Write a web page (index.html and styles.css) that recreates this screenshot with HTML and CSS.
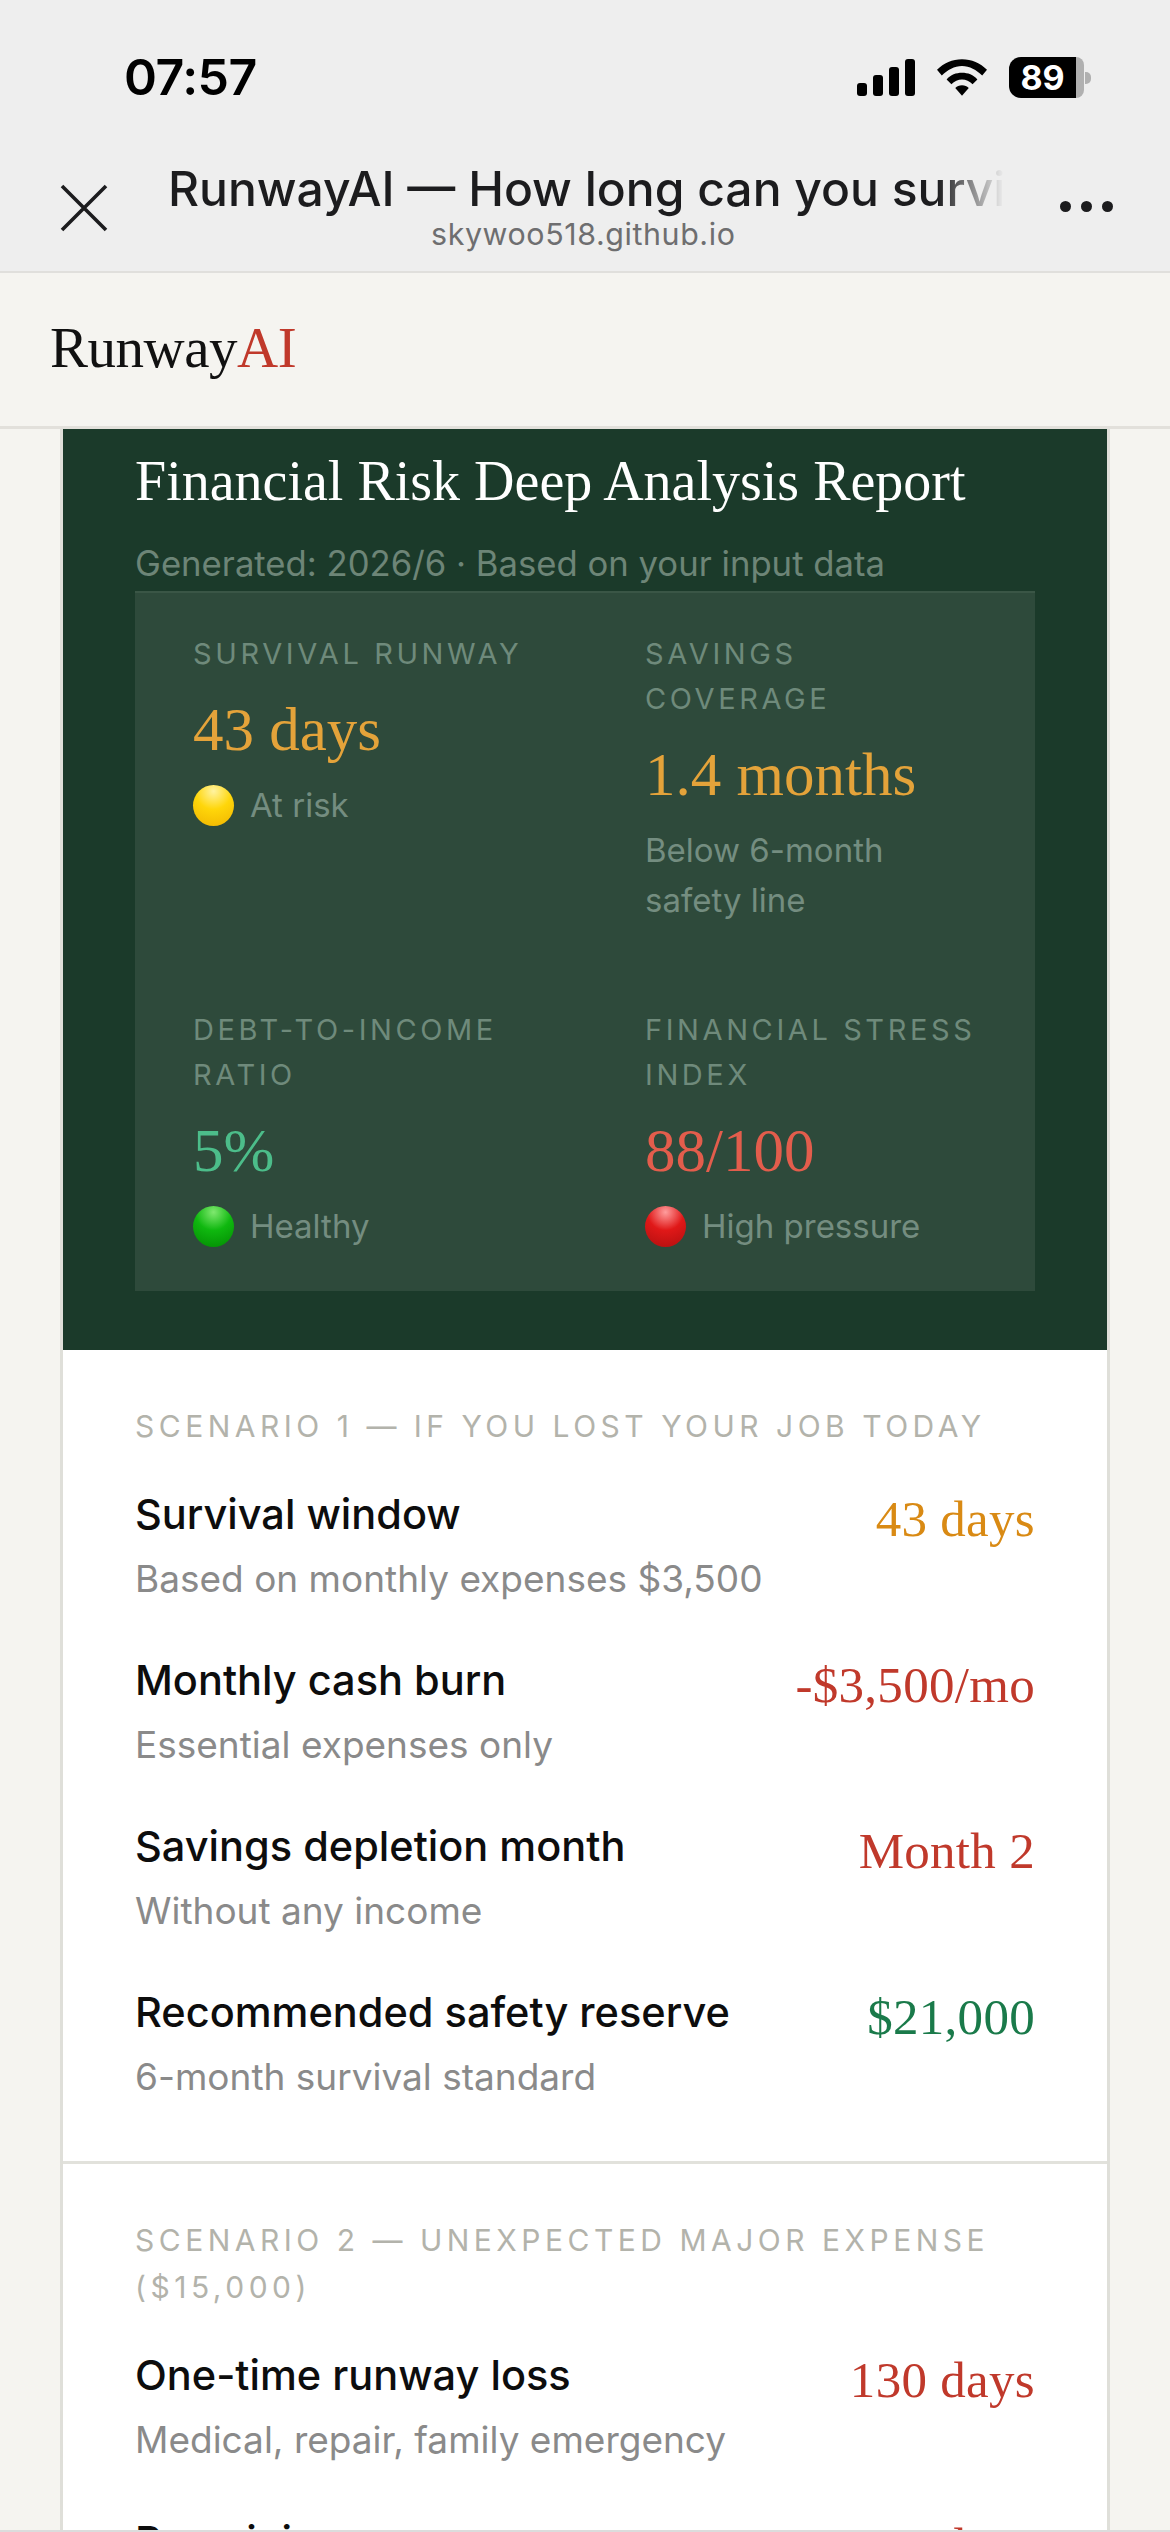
FILE: index.html
```html
<!DOCTYPE html>
<html lang="en">
<head>
  <meta charset="UTF-8" />
  <title>RunwayAI</title>
  <link rel="stylesheet" href="styles.css">
</head>
<body>
  <div class="browser-top">
    <div class="status-bar">
      <span class="clock">07:57</span>
      <div class="status-icons">
        <svg class="signal" width="58" height="37" viewBox="0 0 58 37"><rect x="0" y="24" width="10" height="13" rx="3"/><rect x="16" y="16" width="10" height="21" rx="3"/><rect x="32" y="8" width="10" height="29" rx="3"/><rect x="48" y="0" width="10" height="37" rx="3"/></svg>
        <svg class="wifi" width="50" height="37" viewBox="0 0 52 38"><path d="M26 0C16 0 7 4 0 11l5 6C11 11 18 7 26 7s15 4 21 10l5-6C45 4 36 0 26 0z"/><path d="M26 14c-6 0-12 2-16 7l5 5c3-3 7-5 11-5s8 2 11 5l5-5c-4-5-10-7-16-7z"/><path d="M26 27c-3 0-5 1-7 3l7 8 7-8c-2-2-4-3-7-3z"/></svg>
        <div class="battery"><span class="battery-fill">89</span><span class="battery-rest"></span><span class="battery-cap"></span></div>
      </div>
    </div>
    <div class="title-bar">
      <svg class="close-icon" width="48" height="48" viewBox="0 0 48 48"><path d="M2 2l44 44M46 2L2 46" stroke="#1c1c1e" stroke-width="3.6" fill="none"/></svg>
      <div class="title-text">
        <div class="page-title">RunwayAI — How long can you survive</div>
        <div class="page-url">skywoo518.github.io</div>
      </div>
      <div class="more-dots"><i></i><i></i><i></i></div>
    </div>
  </div>

  <header class="site-header">
    <div class="logo">Runway<span>AI</span></div>
  </header>

  <main class="report">
    <section class="hero">
      <h1>Financial Risk Deep Analysis Report</h1>
      <p class="generated">Generated: 2026/6 · Based on your input data</p>
      <div class="metrics">
        <div class="metric">
          <div class="metric-label">SURVIVAL RUNWAY</div>
          <div class="metric-value amber">43 days</div>
          <div class="metric-note"><b class="dot dot-yellow"></b>At risk</div>
        </div>
        <div class="metric">
          <div class="metric-label">SAVINGS COVERAGE</div>
          <div class="metric-value amber">1.4 months</div>
          <div class="metric-note">Below 6-month safety line</div>
        </div>
        <div class="metric">
          <div class="metric-label">DEBT-TO-INCOME RATIO</div>
          <div class="metric-value mint">5%</div>
          <div class="metric-note"><b class="dot dot-green"></b>Healthy</div>
        </div>
        <div class="metric">
          <div class="metric-label">FINANCIAL STRESS INDEX</div>
          <div class="metric-value coral">88/100</div>
          <div class="metric-note"><b class="dot dot-red"></b>High pressure</div>
        </div>
      </div>
    </section>

    <section class="scenario">
      <h2>SCENARIO 1 — IF YOU LOST YOUR JOB TODAY</h2>
      <div class="row">
        <div><div class="row-name">Survival window</div><div class="row-sub">Based on monthly expenses $3,500</div></div>
        <div class="row-value orange">43 days</div>
      </div>
      <div class="row">
        <div><div class="row-name">Monthly cash burn</div><div class="row-sub">Essential expenses only</div></div>
        <div class="row-value red">-$3,500/mo</div>
      </div>
      <div class="row">
        <div><div class="row-name">Savings depletion month</div><div class="row-sub">Without any income</div></div>
        <div class="row-value red">Month 2</div>
      </div>
      <div class="row">
        <div><div class="row-name">Recommended safety reserve</div><div class="row-sub">6-month survival standard</div></div>
        <div class="row-value green">$21,000</div>
      </div>
    </section>

    <section class="scenario">
      <h2>SCENARIO 2 — UNEXPECTED MAJOR EXPENSE ($15,000)</h2>
      <div class="row">
        <div><div class="row-name">One-time runway loss</div><div class="row-sub">Medical, repair, family emergency</div></div>
        <div class="row-value red">130 days</div>
      </div>
      <div class="row">
        <div><div class="row-name">Remaining runway</div><div class="row-sub">After the expense</div></div>
        <div class="row-value red">0 days</div>
      </div>
    </section>
  </main>
  <div class="screen-edge"></div>
</body>
</html>
```

FILE: styles.css
```css
* { box-sizing: border-box; }
html, body { height: 2532px; overflow: hidden; }
body {
  margin: 0;
  background: #f5f4f0;
  font-family: Inter, sans-serif;
  color: #0d0d0d;
}

.browser-top {
  height: 273px;
  background: #eeeeee;
  border-bottom: 2px solid #e0dfdc;
}
.status-bar {
  height: 140px;
  padding: 52px 79px 0 124px;
  display: flex;
  justify-content: space-between;
  align-items: flex-start;
}
.clock { font-size: 50px; font-weight: 600; line-height: 50px; color: #000; letter-spacing: -0.5px; }
.status-icons { display: flex; align-items: center; gap: 22px; margin-top: 5px; }
.status-icons svg { fill: #000; display: block; }
.battery { display: flex; align-items: center; }
.battery-fill {
  width: 67px;
  height: 41px;
  background: #000;
  color: #fff;
  border-radius: 12px 0 0 12px;
  font-size: 34px;
  font-weight: 700;
  line-height: 41px;
  text-align: center;
}
.battery-rest { width: 8px; height: 41px; background: #b0b0b0; border-radius: 0 10px 10px 0; }
.battery-cap { width: 6px; height: 12px; background: #b0b0b0; margin-left: 1px; border-radius: 0 5px 5px 0; }

.title-bar { display: flex; align-items: flex-start; height: 130px; }
.close-icon { margin: 44px 0 0 60px; flex: none; }
.title-text { width: 830px; margin-left: 60px; }
.page-title {
  font-size: 48px;
  font-weight: 500;
  line-height: 60px;
  margin-top: 19px;
  white-space: nowrap;
  overflow: hidden;
  width: 836px;
  color: #1c1c1e;
  -webkit-mask-image: linear-gradient(to right, #000 92%, transparent 100%);
  mask-image: linear-gradient(to right, #000 92%, transparent 100%);
}
.page-url {
  font-size: 30.4px;
  line-height: 34px;
  color: #6e6e70;
  letter-spacing: 0.6px;
  width: 830px;
  padding-left: 263px;
  margin-top: -2px;
}
.more-dots { display: flex; gap: 10px; margin: 61px 0 0 62px; }
.more-dots i { width: 11px; height: 11px; border-radius: 50%; background: #1c1c1e; }

.site-header {
  height: 156px;
  padding: 0 50px 4px;
  display: flex;
  align-items: center;
  background: #f5f4f0;
  border-bottom: 3px solid #e2e0db;
}
.logo { font-family: "Liberation Serif", serif; font-size: 57px; letter-spacing: -0.5px; color: #111; }
.logo span { color: #c0392b; }

.report {
  width: 1050px;
  margin-left: 60px;
  background: #fff;
  border-left: 3px solid #dfdfd9;
  border-right: 3px solid #dfdfd9;
}

.hero {
  background: #1b3a2a;
  height: 921px;
  padding: 0 72px;
  overflow: hidden;
}
.hero h1 {
  margin: 20px 0 0;
  font-family: "Liberation Serif", serif;
  font-weight: 400;
  font-size: 56px;
  line-height: 64px;
  color: #fff;
  white-space: nowrap;
}
.generated {
  margin: 29px 0 0;
  font-size: 34.7px;
  line-height: 42px;
  color: #6d8577;
  white-space: nowrap;
}
.metrics {
  margin-top: 7px;
  height: 700px;
  background: #2e4a3b;
  border-top: 2px solid #3a5646;
  padding: 41px 58px 0;
  display: grid;
  grid-template-columns: 452px 1fr;
  grid-template-rows: 376px 1fr;
}
.metric { padding-right: 20px; }
.metric:nth-child(2n) { padding-right: 0; }
.metric-label {
  font-size: 29px;
  line-height: 45px;
  letter-spacing: 3.6px;
  color: #6f8a7b;
  margin-top: -3px;
}
.metric:nth-child(3) .metric-label { padding-right: 40px; }
.metric-value {
  font-family: "Liberation Serif", serif;
  font-size: 61px;
  line-height: 68px;
  margin-top: 20px;
}
.metric-note {
  font-size: 33px;
  line-height: 50px;
  color: #748d80;
  margin-top: 16px;
  display: flex;
  align-items: center;
}
.metric:nth-child(2) .metric-note { display: block; }
.amber { color: #e4a33a; }
.mint { color: #4cbd8a; }
.coral { color: #e35d4c; }
.dot {
  width: 41px;
  height: 41px;
  border-radius: 50%;
  margin-right: 16px;
  flex: none;
}
.dot-yellow { background: radial-gradient(circle at 50% 15%, #fff3a0 0, #ffd60a 45%, #f0b400 100%); }
.dot-green { background: radial-gradient(circle at 50% 15%, #7fe86f 0, #0fb80f 45%, #028a02 100%); }
.dot-red { background: radial-gradient(circle at 50% 15%, #ff9d9d 0, #e01818 45%, #b00f0f 100%); }

.scenario {
  padding: 53px 72px 0;
  height: 814px;
  border-bottom: 3px solid #e2e2dc;
}
.scenario h2 {
  margin: 0 0 32px;
  font-size: 30px;
  line-height: 47px;
  font-weight: 400;
  letter-spacing: 4.5px;
  color: #b3b3ab;
}
.row {
  display: flex;
  justify-content: space-between;
  align-items: flex-start;
  height: 166px;
}
.row-name { font-size: 41.5px; font-weight: 450; line-height: 50px; color: #0d0d0d; margin-top: 7px; }
.row-sub { font-size: 37px; line-height: 50px; color: #8a8a8a; margin-top: 15px; }
.row-value {
  font-family: "Liberation Serif", serif;
  font-size: 51px;
  letter-spacing: 0.3px;
  line-height: 56px;
  margin-top: 9px;
  white-space: nowrap;
}
.orange { color: #d98a14; }
.red { color: #c0392b; }
.green { color: #1a7a4a; }

/* thin edge at the very bottom of the capture */
.screen-edge {
  position: fixed;
  left: 0;
  right: 0;
  bottom: 0;
  height: 2px;
  background: #dcdcdc;
}
```
